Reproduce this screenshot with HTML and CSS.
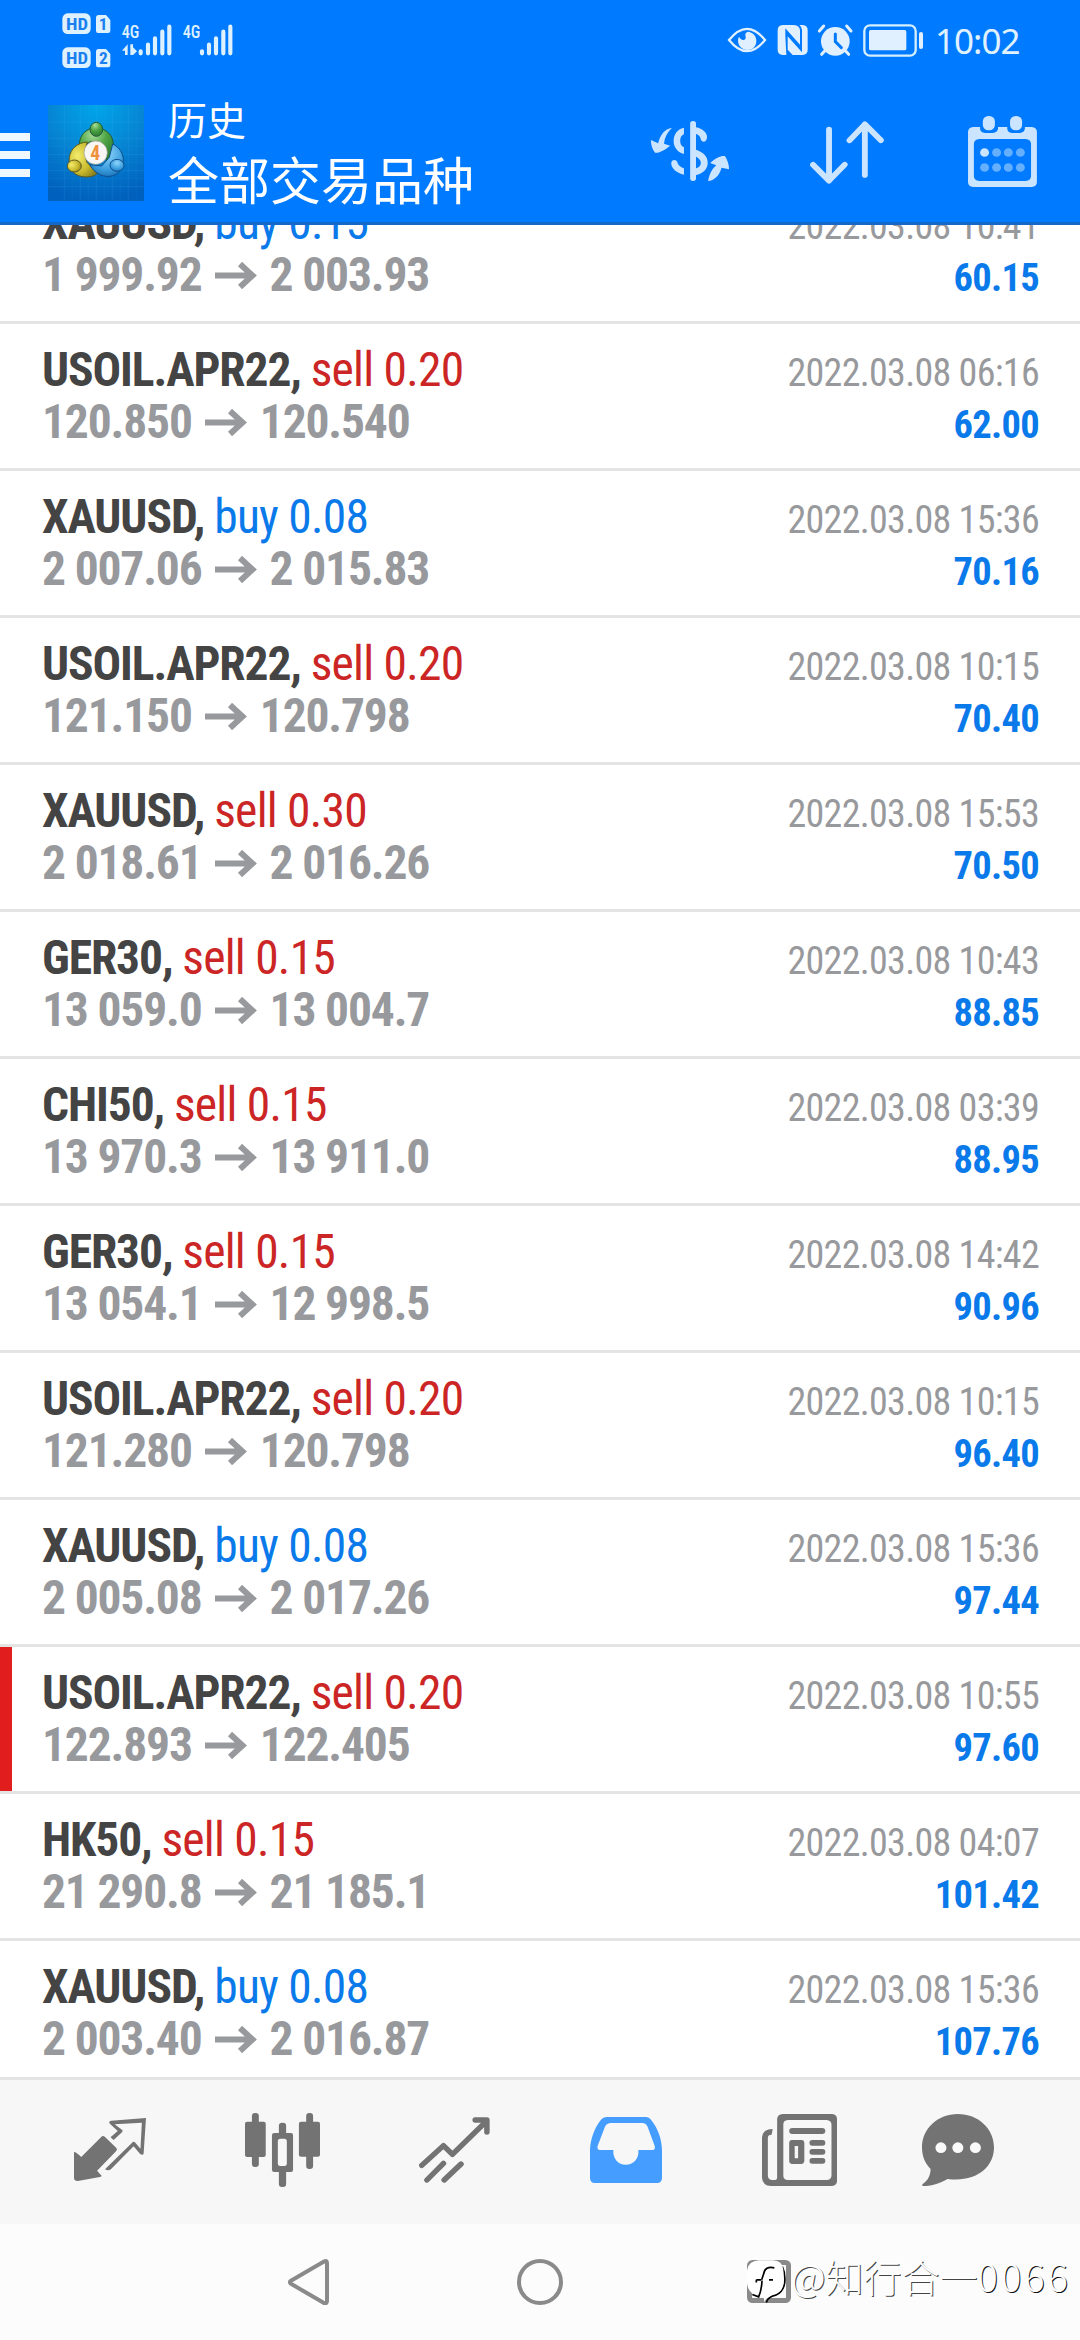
FILE: index.html
```html
<!DOCTYPE html>
<html lang="zh-CN">
<head>
<meta charset="utf-8">
<title>历史</title>
<link rel="stylesheet" href="styles.css">
</head>
<body>
<div class="screen">
<header class="header">
  <div class="status">
    <svg class="status-left" viewBox="0 0 600 210" fill="#def1ff">
      <rect x="37" y="25" width="85" height="62" rx="16"/>
      <rect x="37" y="127" width="85" height="62" rx="16"/>
      <path d="M146 30H168L181 45V78Q181 84 174 84H144Q138 84 138 77V38Q138 30 146 30Z"/>
      <path d="M146 132H168L181 147V180Q181 187 174 187H144Q138 187 138 180V140Q138 132 146 132Z"/>
      <g class="badge-text" fill="#1a80ef">
        <text x="48" y="76" textLength="66" lengthAdjust="spacingAndGlyphs">HD</text>
        <text x="48" y="178" textLength="66" lengthAdjust="spacingAndGlyphs">HD</text>
        <text x="146" y="76">1</text>
        <text x="147" y="178">2</text>
      </g>
      <g class="net-text">
        <text x="215" y="99" textLength="53" lengthAdjust="spacingAndGlyphs">4G</text>
        <text x="398" y="99" textLength="53" lengthAdjust="spacingAndGlyphs">4G</text>
      </g>
      <path d="M233 118V150H225V137H216ZM241 118H249V127L261 139L249 150H241Z"/>
      <g stroke="#def1ff" stroke-width="12.5" stroke-linecap="round">
        <path d="M272 139V145M294 119V145M315 100V145M337 80V145M358 65V145"/>
        <path d="M456 139V145M477 119V145M498 100V145M520 80V145M541 65V145"/>
      </g>
    </svg>
    <div class="status-right">
      <svg class="status-icons" viewBox="0 0 615 150" fill="#e1f0ff">
        <path d="M21 75Q75 8 129 75Q75 142 21 75Z" fill="none" stroke="#e1f0ff" stroke-width="7"/>
        <path d="M78 50C96 52 103 66 103 78C103 95 91 105 77 105C60 105 48 93 48 76C48 72 49 68 51 65C56 74 62 76 67 74C75 71 69 62 70 57C72 53 75 50 78 50Z"/>
        <path d="M182 30H216Q232 31 234 45V89L190 40V62L193 120H182Q167 119 167 105V46Q167 31 182 30Z"/>
        <path d="M232 30H242Q257 31 257 46V105Q257 119 242 120H212L197 104V64L240 112V45Q239 35 232 30Z"/>
        <circle cx="340" cy="79" r="43"/>
        <path d="M292 48L305 33M387 48L374 33M308 108L299 118M371 108L380 118" fill="none" stroke="#e1f0ff" stroke-width="9" stroke-linecap="round"/>
        <path d="M340 57V80L358 98" fill="none" stroke="#007aff" stroke-width="9" stroke-linecap="round"/>
        <rect x="427" y="31" width="154" height="91" rx="17" fill="none" stroke="#d5efff" stroke-width="7"/>
        <rect x="441" y="45" width="112" height="61" rx="5"/>
        <rect x="591" y="51" width="12" height="51" rx="6"/>
      </svg>
      <span class="clock">10:02</span>
    </div>
  </div>
  <div class="appbar">
    <svg class="menu" viewBox="0 0 30 44" fill="#f0f8ff"><path d="M0 0H30V8H0ZM0 18H30V26H0ZM0 36H30V44H0Z"/></svg>
    <svg class="logo" viewBox="24 21 288 288">
      <defs>
        <radialGradient id="bg" cx=".5" cy="0" r="1"><stop offset="0" stop-color="#00a6ea"/><stop offset=".5" stop-color="#0685d3"/><stop offset="1" stop-color="#0060bd"/></radialGradient>
        <radialGradient id="gn" cx=".4" cy=".2" r=".8"><stop offset="0" stop-color="#a9dd9b"/><stop offset=".5" stop-color="#4fa544"/><stop offset="1" stop-color="#2c7a35"/></radialGradient>
        <radialGradient id="ye" cx=".3" cy=".4" r=".8"><stop offset="0" stop-color="#f3ec6c"/><stop offset=".6" stop-color="#c9b92e"/><stop offset="1" stop-color="#857b1b"/></radialGradient>
        <radialGradient id="bl" cx=".5" cy=".3" r=".8"><stop offset="0" stop-color="#8fd4fa"/><stop offset=".6" stop-color="#3c9fe0"/><stop offset="1" stop-color="#1668ae"/></radialGradient>
      </defs>
      <rect x="24" y="21" width="288" height="288" fill="url(#bg)"/>
      <path d="M73 21V309M121 21V309M169 21V309M217 21V309M265 21V309M24 72H312M24 121H312M24 170H312M24 218H312M24 266H312" stroke="#5cc4f5" stroke-opacity=".2" stroke-width="2"/>
      <path d="M97 21V309M145 21V309M193 21V309M241 21V309M289 21V309M24 96H312M24 145H312M24 194H312M24 242H312" stroke="#5cc4f5" stroke-opacity=".1" stroke-width="2"/>
      <g stroke-width="3">
        <path d="M118 140C118 108 142 90 168 90C198 90 220 112 220 140C220 160 210 180 200 190L185 140L152 130L130 145Z" fill="url(#gn)" stroke="#215c33"/>
        <path d="M142 132C112 134 92 152 88 178C84 214 104 238 140 237C156 237 166 232 172 226L140 192L134 160Z" fill="url(#ye)" stroke="#5d5a20"/>
        <path d="M218 138C240 148 251 170 250 190C247 220 226 238 198 235C176 232 158 218 150 200L185 204L208 178Z" fill="url(#bl)" stroke="#0e4f8c"/>
        <ellipse cx="169" cy="94" rx="19" ry="21" fill="url(#gn)" stroke="#215c33"/>
        <ellipse cx="103" cy="204" rx="21" ry="18" fill="url(#ye)" stroke="#5d5a20"/>
        <ellipse cx="231" cy="202" rx="21" ry="18" fill="url(#bl)" stroke="#0e4f8c"/>
      </g>
      <circle cx="167" cy="164" r="35" fill="#f8f7f5" stroke="#9a9a8c" stroke-width="2"/>
      <text class="logo-num" x="151" y="186">4</text>
    </svg>
    <div class="titles">
      <div class="title-small">历史</div>
      <div class="title-big">全部交易品种</div>
    </div>
    <div class="actions">
      <svg viewBox="319.4 348 232.3 216" preserveAspectRatio="none" fill="#cbe4ff">
        <rect x="436" y="363" width="17" height="180" rx="8"/>
        <path d="M418 383C398 388 388 403 388 423C388 443 400 457 418 462V442C410 438 407 431 407 422C407 412 411 406 418 402Z"/>
        <path d="M453 382C472 386 485 398 485 411C485 428 469 431 466 415C464 407 459 404 453 402Z"/>
        <path d="M453 449C474 457 487 468 487 488C487 508 472 521 453 525V505C462 501 467 497 467 488C467 480 460 473 453 470Z"/>
        <path d="M381 490C381 477 398 476 400 490C402 497 410 503 418 505V524C398 520 381 506 381 490Z"/>
        <path d="M383 384C362 386 349 405 343 430L322 420C322 437 327 449 334 458C341 461 360 452 378 437L360 431C362 412 370 396 383 384Z"/>
        <path d="M488 543C491 530 494 512 512 496L494 489C510 473 527 466 537 468C544 479 549 493 549 508L527 503C521 528 505 541 488 543Z"/>
      </svg>
      <svg viewBox="772.5 348 232.3 216" preserveAspectRatio="none" fill="none" stroke="#cbe4ff" stroke-width="17" stroke-linecap="round" stroke-linejoin="round">
        <path d="M836.500 389V541M790 494L836.500 542L882 494M940.500 525V373M896 421L940.500 373L987 421"/>
      </svg>
      <svg viewBox="1228.4 348 232.3 216" preserveAspectRatio="none" fill="#cbe4ff">
        <path fill-rule="evenodd" d="M1258 381H1278V387Q1279 398 1292 399H1315Q1328 398 1330 387V381H1357V387Q1358 398 1370 399H1394Q1406 398 1408 387V381H1428Q1443 382 1443 396V546Q1443 560 1428 561H1258Q1243 560 1243 546V396Q1243 382 1258 381ZM1276 417Q1260 418 1260 433V528Q1260 542 1276 543H1410Q1426 542 1426 528V433Q1426 418 1410 417Z"/>
        <rect x="1286" y="348" width="35" height="43" rx="16"/><rect x="1365" y="348" width="35" height="43" rx="16"/>
        <circle cx="1291" cy="457.500" r="13"/>
        <g fill="#65afff"><circle cx="1326" cy="457.500" r="13"/><circle cx="1360" cy="457.500" r="13"/><circle cx="1395" cy="457.500" r="13"/><circle cx="1291" cy="502.500" r="13"/><circle cx="1326" cy="502.500" r="13"/><circle cx="1360" cy="502.500" r="13"/><circle cx="1395" cy="502.500" r="13"/></g>
      </svg>
    </div>
  </div>
</header>

<main class="list" id="list"></main>

<nav class="tabs">
  <a class="tab"><svg width="72" height="63" viewBox="215 177 209 189" preserveAspectRatio="none" fill="#737373">
    <path d="M215 280Q217 276 236 294L294 234Q299 228 305 234L338 267Q342 272 337 277L282 335L295 350Q296 353 290 354L226 366Q215 366 215 357Z"/>
    <path d="M317 190Q318 185 323 185L424 177L417 285Q414 290 407 285L388 262L322 331Q315 337 305 331L383 252Q388 245 393 251L408 269L412 191L333 196L355 213Q357 216 355 219L330 243L321 235L342 216L319 194Z"/>
  </svg></a>
  <a class="tab"><svg width="75" height="74" viewBox="709 159 217 222" preserveAspectRatio="none" fill="#737373">
    <rect x="709" y="185" width="60" height="106" rx="6"/><rect x="729" y="159" width="20" height="162" rx="9"/>
    <rect x="865" y="185" width="61" height="105" rx="6"/><rect x="886" y="159" width="20" height="168" rx="9"/>
    <rect x="807" y="188" width="21" height="45" rx="9"/><rect x="807" y="325" width="21" height="56" rx="9"/>
    <path fill-rule="evenodd" d="M794 219H842Q848 219 848 225V330Q848 336 842 336H794Q787 336 787 330V225Q787 219 794 219ZM811 236Q804 236 804 244V311Q804 318 811 318H823Q830 318 830 311V244Q830 236 823 236Z"/>
  </svg></a>
  <a class="tab"><svg width="71" height="66" viewBox="1214 168 206 198" preserveAspectRatio="none" fill="none" stroke="#737373" stroke-width="16" stroke-linecap="round" stroke-linejoin="round">
    <path d="M1222 313L1285 254L1311 280L1409 181M1377 177H1411V213"/>
    <path d="M1237 357L1285 307M1287 357L1336 309"/>
  </svg></a>
  <a class="tab"><svg width="72" height="66" viewBox="146 168 210 198" preserveAspectRatio="none">
    <path fill="#459dff" d="M194 168H310Q319 168 324 176C345 203 356 236 356 270V352Q355 366 342 366H160Q147 366 146 352V265C148 230 160 200 178 176Q184 168 194 168Z"/>
    <path fill="#f7f7f7" d="M205 186H298Q310 187 314 197L335 256Q337 267 328 267H287C290 294 272 311 250 311C229 311 212 294 214 267H175Q166 267 168 256L189 199Q194 187 205 186Z"/>
  </svg></a>
  <a class="tab"><svg width="75" height="72" viewBox="646 159 218 216" preserveAspectRatio="none" fill="#737373">
    <path fill-rule="evenodd" d="M706 159H850Q863 160 864 173V361Q863 374 850 375H672Q648 374 646 350V229Q648 204 677 204L674 221Q663 221 663 230V345Q664 356 674 357H685Q690 356 690 350V173Q692 160 706 159ZM721 177Q708 178 708 190V344Q708 356 721 357H834Q847 356 848 344V190Q847 178 834 177Z"/>
    <rect x="725" y="201" width="105" height="18" rx="9"/>
    <path fill-rule="evenodd" d="M732 237H762Q769 238 769 245V301Q768 308 762 309H732Q725 308 725 301V245Q725 238 732 237ZM741 255V292H751V255Z"/>
    <rect x="784" y="237" width="46" height="17" rx="8"/><rect x="784" y="264" width="46" height="17" rx="8"/><rect x="784" y="291" width="46" height="17" rx="8"/>
  </svg></a>
  <a class="tab"><svg width="72" height="72" viewBox="1109 159 209 216" preserveAspectRatio="none">
    <path fill="#737373" d="M1213 159C1272 159 1318 203 1318 259C1318 320 1265 365 1183 354C1158 370 1132 375 1113 375Q1107 375 1111 369C1128 357 1133 343 1134 324C1118 307 1109 287 1109 259C1109 203 1155 159 1213 159Z"/>
    <g fill="#fafafa"><circle cx="1164" cy="260" r="16"/><circle cx="1213" cy="260" r="16"/><circle cx="1264" cy="260" r="16"/></g>
  </svg></a>
</nav>

<footer class="sysnav">
  <svg class="nav-back" viewBox="0 0 41 46" fill="none" stroke="#8a8a8a" stroke-width="4" stroke-linejoin="round"><path d="M2.500 22Q1.500 23 2.500 24.500L36 44Q39 45 39 42V4Q39 1 36 2.500Z"/></svg>
  <svg class="nav-home" viewBox="0 0 46 46" fill="none" stroke="#8a8a8a" stroke-width="4"><circle cx="23" cy="23" r="21"/></svg>
  <svg class="nav-recent" viewBox="0 0 44 43" fill="none" stroke="#8a8a8a" stroke-width="5"><rect x="2.500" y="2.500" width="39" height="38" rx="3"/></svg>
  <div class="watermark">
    <svg class="mark" viewBox="22 28 132 134">
      <path d="M128 50Q138 70 135 100Q130 128 108 136Q84 141 80 158" fill="none" stroke="#000" stroke-width="5"/>
      <path d="M58 31H100Q128 32 131 58V98Q130 126 104 133Q82 139 74 157L72 140Q24 138 22 98V62Q24 34 58 31Z" fill="#fff"/>
      <path d="M104 54Q76 48 72 72L66 90M50 90H64M88 90H100M50 98V90M67 92Q66 120 57 141L38 134" fill="none" stroke="#000" stroke-width="5"/>
    </svg>
    <span class="wm-text">@知行合一<span class="wm-num">0066</span></span>
  </div>
</footer>
</div>
<script src="app.js"></script>
</body>
</html>
```
FILE: styles.css
```css
* { box-sizing: border-box; }
body { margin: 0; background: #fff; }
svg { display: block; flex: none; }

.screen {
  width: 1080px;
  height: 2340px;
  display: flex;
  flex-direction: column;
  overflow: hidden;
  font-family: "Roboto Condensed", "Roboto", "Noto Sans CJK SC", sans-serif;
}

/* header */
.header {
  flex: none;
  height: 225px;
  background: #007aff;
  border-bottom: 3px solid #1469c8;
  position: relative;
  z-index: 1;
}
.status {
  height: 75px;
  display: flex;
  justify-content: space-between;
  padding: 5px 60px 0 50px;
}
.status-left { width: 200px; height: 70px; }
.badge-text { font: 700 52px "Roboto Condensed", sans-serif; }
.net-text { font: 500 57px "Roboto Condensed", sans-serif; }
.status-right { display: flex; padding-top: 10px; }
.status-icons { width: 205px; height: 50px; }
.clock {
  width: 85px;
  margin-left: 8px;
  font: 400 35px/52px "Noto Sans", sans-serif;
  letter-spacing: -1px;
  color: #e1f2ff;
  white-space: nowrap;
}
.appbar { height: 147px; display: flex; align-items: flex-start; }
.menu { width: 30px; height: 44px; margin-top: 58px; }
.logo { width: 96px; height: 96px; margin: 30px 0 0 18px; }
.logo-num { font: 700 59px "Roboto Condensed", sans-serif; fill: #f0913e; }
.titles {
  margin: 21px 0 0 24px;
  color: #fff;
  font-family: "Noto Sans CJK SC", sans-serif;
}
.title-small { font-size: 39px; line-height: 44px; }
.title-big { font-size: 51px; line-height: 60px; margin-top: 8px; }
.actions {
  margin: 41px 37px 0 auto;
  display: flex;
  gap: 76.5px;
}
.actions svg { width: 80px; height: 72px; }

/* deals */
.list { flex: none; height: 1852px; overflow: hidden; }
.deal {
  height: 147px;
  padding: 21px 41px 0 42px;
  border-bottom: 3px solid #e4e4e4;
}
.deal:first-child { margin-top: -48px; }
.deal.marked {
  background: linear-gradient(#e21d1d, #e21d1d) no-repeat 0 0 / 12px 144px;
}
.line {
  height: 51px;
  line-height: 51px;
  display: flex;
  justify-content: space-between;
  align-items: baseline;
  white-space: nowrap;
}
.line + .line { margin-top: 1px; }
.name { font-size: 47.5px; font-weight: 700; letter-spacing: -1.1px; color: #444; }
.side { font-weight: 400; letter-spacing: -0.75px; }
.sell { color: #cc2525; }
.buy { color: #0a7aea; }
.prices { font-size: 47.5px; font-weight: 700; letter-spacing: -1.15px; color: #98999d; }
.arrow { display: inline-block; width: 42px; height: 27px; margin: 0 13px; vertical-align: 2px; }
.time { font-size: 38px; letter-spacing: -0.7px; color: #98999c; }
.profit { font-size: 38.5px; font-weight: 700; letter-spacing: -0.7px; color: #0a7aea; }

/* bottom tabs */
.tabs {
  flex: none;
  height: 147px;
  display: flex;
  padding-left: 24px;
  background: #f7f7f7;
  border-top: 3px solid #e4e4e4;
}
.tab { width: 172px; display: flex; justify-content: center; align-items: center; padding-bottom: 5px; }
.tab:nth-child(5) { padding-left: 3px; }
.tab:last-child { width: 148px; }

/* system navigation */
.sysnav {
  position: relative;
  flex: none;
  height: 116px;
  display: flex;
  align-items: flex-start;
  padding: 35px 0 0 288px;
  background: #fcfcfc;
}
.nav-back { width: 41px; height: 46px; }
.nav-home { width: 46px; height: 46px; margin-left: 188px; }
.nav-recent { width: 44px; height: 43px; margin: 1px 0 0 184px; }
.watermark { position: absolute; left: 747px; top: 35px; display: flex; height: 45px; }
.mark { width: 44px; height: 45px; }
.wm-text {
  margin-top: -6px;
  font: 300 38px/45px "Noto Sans CJK SC", sans-serif;
  color: #fff;
  text-shadow: 1px 1px 0 #444;
  white-space: nowrap;
}
.wm-num { letter-spacing: 3px; text-shadow: 1px 1px 0 #111; }
```
FILE: app.js
```js
const deals = [
  ["XAUUSD", "buy", "0.15", "1 999.92", "2 003.93", "2022.03.08 10:41", "60.15"],
  ["USOIL.APR22", "sell", "0.20", "120.850", "120.540", "2022.03.08 06:16", "62.00"],
  ["XAUUSD", "buy", "0.08", "2 007.06", "2 015.83", "2022.03.08 15:36", "70.16"],
  ["USOIL.APR22", "sell", "0.20", "121.150", "120.798", "2022.03.08 10:15", "70.40"],
  ["XAUUSD", "sell", "0.30", "2 018.61", "2 016.26", "2022.03.08 15:53", "70.50"],
  ["GER30", "sell", "0.15", "13 059.0", "13 004.7", "2022.03.08 10:43", "88.85"],
  ["CHI50", "sell", "0.15", "13 970.3", "13 911.0", "2022.03.08 03:39", "88.95"],
  ["GER30", "sell", "0.15", "13 054.1", "12 998.5", "2022.03.08 14:42", "90.96"],
  ["USOIL.APR22", "sell", "0.20", "121.280", "120.798", "2022.03.08 10:15", "96.40"],
  ["XAUUSD", "buy", "0.08", "2 005.08", "2 017.26", "2022.03.08 15:36", "97.44"],
  ["USOIL.APR22", "sell", "0.20", "122.893", "122.405", "2022.03.08 10:55", "97.60", true],
  ["HK50", "sell", "0.15", "21 290.8", "21 185.1", "2022.03.08 04:07", "101.42"],
  ["XAUUSD", "buy", "0.08", "2 003.40", "2 016.87", "2022.03.08 15:36", "107.76"]
];

const arrow = '<svg class="arrow" viewBox="0 0 42 27" fill="none" stroke="#98999d" stroke-width="6"><path d="M0 13.500H39M25 2L37.500 13.500L25 25"/></svg>';

document.getElementById("list").innerHTML = deals.map(([symbol, side, lots, from, to, time, profit, marked]) => `
  <div class="deal${marked ? " marked" : ""}">
    <div class="line"><span class="name">${symbol}, <span class="side ${side}">${side} ${lots}</span></span><span class="time">${time}</span></div>
    <div class="line"><span class="prices">${from}${arrow}${to}</span><span class="profit">${profit}</span></div>
  </div>`).join("");
```
